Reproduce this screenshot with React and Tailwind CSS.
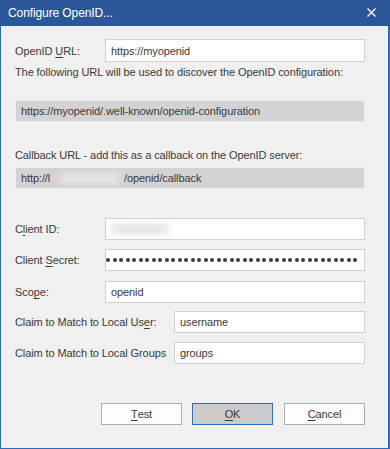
import React from 'react';

const Key = ({ children }) => <u className="underline underline-offset-2 decoration-1">{children}</u>;

const Field = ({ children, className = '' }) => (
  <div className={`flex-1 h-full bg-white border border-[#d0d0d0] flex items-center pl-[5px] overflow-hidden ${className}`}>
    {children}
  </div>
);

const ReadOnly = ({ children, className = '' }) => (
  <div className={`h-[22px] bg-[#d3d3d3] border border-[#ebebeb] flex items-center pl-[5px] whitespace-nowrap ${className}`}>
    {children}
  </div>
);

const Button = ({ children, primary, className = '' }) => (
  <button
    type="button"
    className={`w-[81px] h-[22px] flex items-center justify-center border ${
      primary ? 'bg-[#cccccc] border-[#2b70c2]' : 'bg-[#fdfdfd] border-[#adadad]'
    } ${className}`}
  >
    {children}
  </button>
);

const App = () => {
  const dots = Array.from({ length: 42 });

  return (
    <div className="w-[390px] h-[449px] flex flex-col bg-[#f0f0f0] font-['Liberation_Sans',Arial,sans-serif] text-[11px] leading-[14px] tracking-[-0.1px] text-[#3a3a3a]">
      {/* title bar */}
      <div className="h-[26px] shrink-0 bg-[#2b579a] flex items-center justify-between pl-[8px] pr-[14px] text-white text-[12px] tracking-[-0.1px]">
        <span>Configure OpenID...</span>
        <svg width="9" height="9" viewBox="0 0 9 9" className="mb-[2px]">
          <path d="M0.5 0.5 L8.5 8.5 M8.5 0.5 L0.5 8.5" stroke="#fff" strokeWidth="1.3" />
        </svg>
      </div>

      <div className="flex-1 flex flex-col border-l border-r-2 border-b border-[#2a6cc0] pl-[14px] pr-[23px]">
        <div className="mt-[13px] h-[23px] flex items-center">
          <span className="w-[90px]">OpenID <Key>U</Key>RL:</span>
          <Field>https://myopenid</Field>
        </div>
        <p className="mt-[3px]">The following URL will be used to discover the OpenID configuration:</p>

        <ReadOnly className="mt-[21px]">https://myopenid/.well-known/openid-configuration</ReadOnly>

        <p className="mt-[26px]">Callback URL - add this as a callback on the OpenID server:</p>
        <ReadOnly className="mt-[5px]">
          <span className="w-[35px]">http://l</span>
          <span className="w-[68px] h-[16px] flex items-center justify-center">
            <span className="w-[60px] h-[13px] bg-[#e2e2e2] blur-[3px] rounded-sm" />
          </span>
          <span>/openid/callback</span>
        </ReadOnly>

        <div className="mt-[29px] h-[22px] flex items-center">
          <span className="w-[90px]">C<Key>l</Key>ient ID:</span>
          <Field>
            <span className="w-[58px] h-[12px] bg-[#e6e6e6] blur-[3px] rounded-sm" />
          </Field>
        </div>
        <div className="mt-[9px] h-[22px] flex items-center">
          <span className="w-[90px]">Client <Key>S</Key>ecret:</span>
          <Field className="justify-end pr-[7px]">
            <div className="flex gap-[2.5px] shrink-0">
              {dots.map((_, i) => (
                <span key={i} className="w-[4px] h-[4px] rounded-full bg-[#3a3a3a]" />
              ))}
            </div>
          </Field>
        </div>
        <div className="mt-[10px] h-[22px] flex items-center">
          <span className="w-[90px]">Sco<Key>p</Key>e:</span>
          <Field>openid</Field>
        </div>

        <div className="mt-[8px] h-[22px] flex items-center">
          <span className="w-[159px]">Claim to Match to Local Us<Key>e</Key>r:</span>
          <Field>username</Field>
        </div>
        <div className="mt-[9px] h-[22px] flex items-center">
          <span className="w-[159px]">Claim to Match to Local Groups</span>
          <Field>groups</Field>
        </div>

        <div className="mt-[39px] flex justify-end">
          <Button><Key>T</Key>est</Button>
          <Button primary className="ml-[10px]"><Key>O</Key>K</Button>
          <Button className="ml-[11px]"><Key>C</Key>ancel</Button>
        </div>
      </div>
    </div>
  );
};

export default App;
